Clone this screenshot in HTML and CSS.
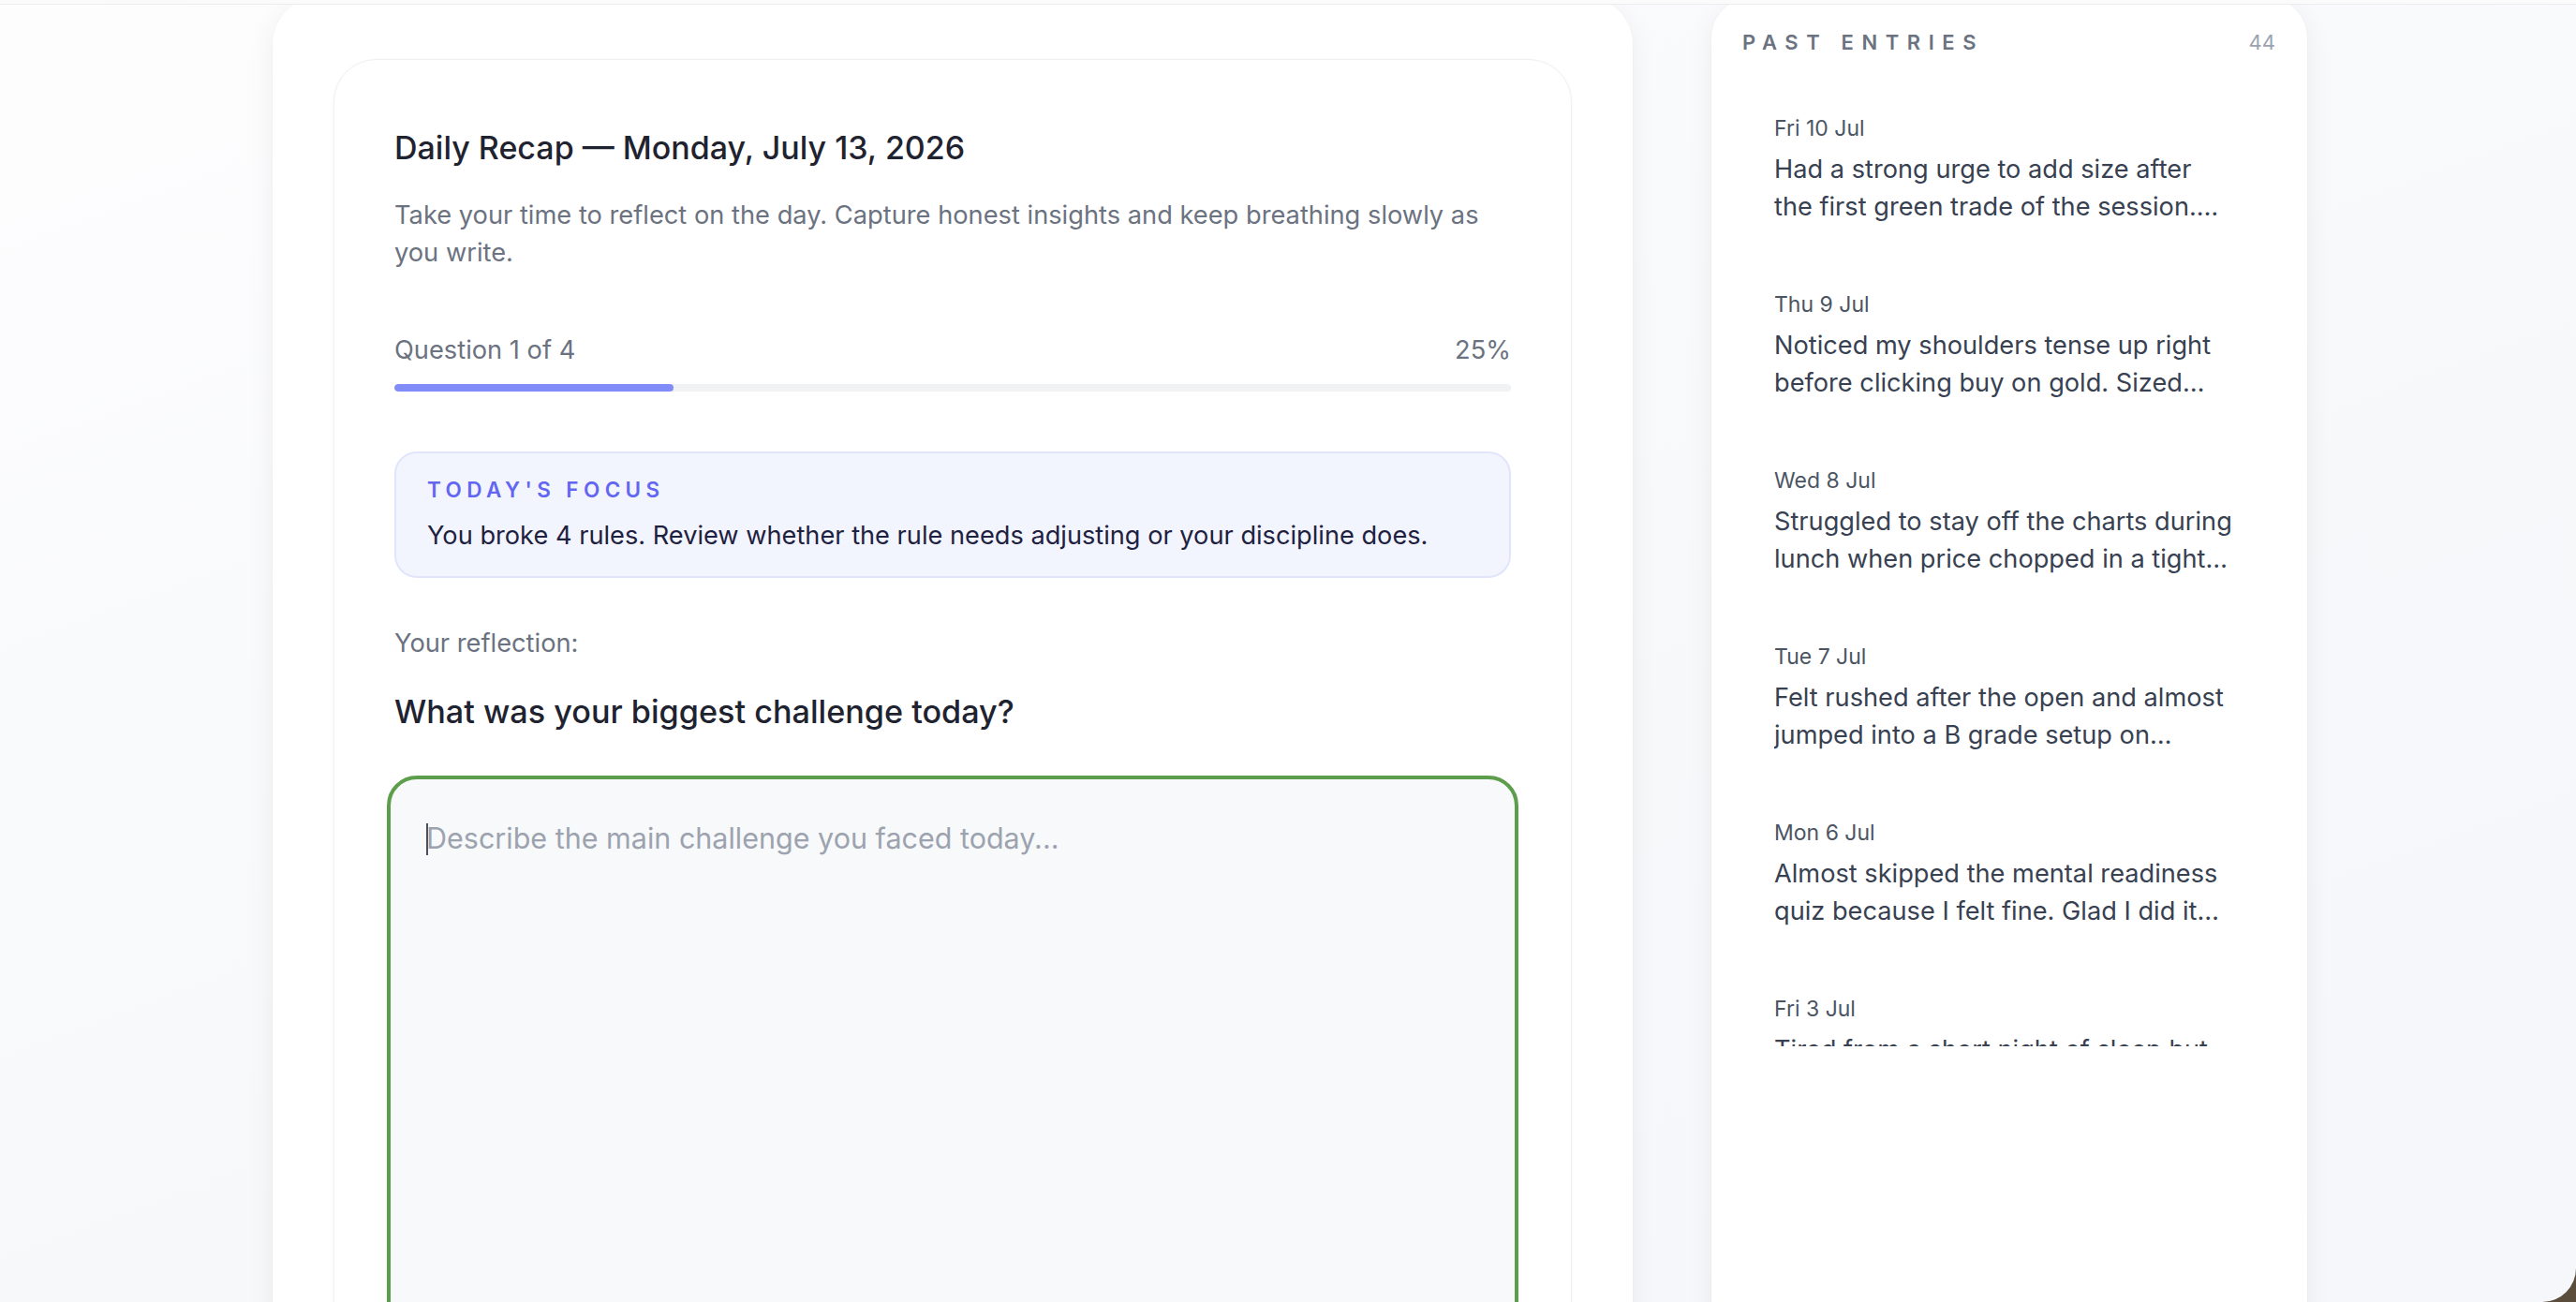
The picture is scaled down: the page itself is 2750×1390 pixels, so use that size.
FILE: index.html
```html
<!DOCTYPE html>
<html lang="en">
<head>
<meta charset="utf-8">
<title>Daily Recap</title>
<link rel="stylesheet" href="styles.css">
</head>
<body>
<div class="app">
  <div class="topbar"></div>
  <div class="content">
    <main class="shell">
      <section class="recap-card">
        <h1 class="recap-title">Daily Recap — Monday, July 13, 2026</h1>
        <p class="recap-desc">Take your time to reflect on the day. Capture honest insights and keep breathing slowly as you write.</p>

        <div class="progress-row">
          <span>Question 1 of 4</span>
          <span>25%</span>
        </div>
        <div class="progress-track"><div class="progress-fill" style="width:25%"></div></div>

        <div class="focus-box">
          <div class="focus-label">TODAY'S FOCUS</div>
          <div class="focus-text">You broke 4 rules. Review whether the rule needs adjusting or your discipline does.</div>
        </div>

        <div class="reflection-label">Your reflection:</div>
        <h2 class="question">What was your biggest challenge today?</h2>

        <div class="answer">
          <span class="caret"></span><span class="placeholder">Describe the main challenge you faced today...</span>
        </div>
      </section>
    </main>

    <aside class="entries-panel">
      <div class="entries-head">
        <span class="entries-title">PAST ENTRIES</span>
        <span class="entries-count">44</span>
      </div>
      <div class="entries-list">
        <div class="entry">
          <div class="entry-date">Fri 10 Jul</div>
          <div class="entry-text">Had a strong urge to add size after the first green trade of the session. Held back and stuck to plan.</div>
        </div>
        <div class="entry">
          <div class="entry-date">Thu 9 Jul</div>
          <div class="entry-text">Noticed my shoulders tense up right before clicking buy on gold. Sized down and breathed first.</div>
        </div>
        <div class="entry">
          <div class="entry-date">Wed 8 Jul</div>
          <div class="entry-text">Struggled to stay off the charts during lunch when price chopped in a tight range all afternoon.</div>
        </div>
        <div class="entry">
          <div class="entry-date">Tue 7 Jul</div>
          <div class="entry-text">Felt rushed after the open and almost jumped into a B grade setup on EURUSD before my plan was ready.</div>
        </div>
        <div class="entry">
          <div class="entry-date">Mon 6 Jul</div>
          <div class="entry-text">Almost skipped the mental readiness quiz because I felt fine. Glad I did it anyway this time.</div>
        </div>
        <div class="entry">
          <div class="entry-date">Fri 3 Jul</div>
          <div class="entry-text">Tired from a short night of sleep but kept my size small and only took A setups.</div>
        </div>
      </div>
    </aside>
  </div>
</div>
</body>
</html>
```
FILE: styles.css
```css
html, body {
  margin: 0;
  padding: 0;
}
html {
  background: #5b4d3b;
}
body {
  font-family: Inter, "Noto Sans", "Liberation Sans", sans-serif;
  -webkit-font-smoothing: antialiased;
}
.app {
  width: 2750px;
  height: 1390px;
  overflow: hidden;
  border-bottom-right-radius: 36px;
  background: linear-gradient(160deg, #fdfdfe 0%, #f7f8fa 60%, #f6f7fa 100%);
  display: flex;
  flex-direction: column;
}
.topbar {
  height: 4px;
  flex: none;
  background: #fbfbfc;
  border-bottom: 1px solid #ececef;
}
.content {
  flex: 1;
  min-height: 0;
  overflow: hidden;
  display: flex;
  justify-content: flex-start;
  gap: 84px;
  padding-left: 291px;
}

/* main card */
.shell {
  width: 1452px;
  flex: none;
  box-sizing: border-box;
  margin-top: -8px;
  margin-bottom: -80px;
  background: #ffffff;
  border-radius: 50px 50px 0 0;
  box-shadow: 0 6px 30px rgba(15, 23, 42, 0.06), 0 1px 3px rgba(15, 23, 42, 0.04);
  padding: 66px 65px 0;
}
.recap-card {
  border: 1px solid #eef0f3;
  border-radius: 46px;
  box-shadow: 0 1px 4px rgba(15, 23, 42, 0.03);
  padding: 72px 64px 80px;
  background: #ffffff;
}
.recap-title {
  margin: 0;
  font-size: 34px;
  line-height: 44px;
  font-weight: 500;
  color: #1f2330;
}
.recap-desc {
  margin: 30px 0 0;
  font-size: 27.25px;
  line-height: 40px;
  color: #6b7280;
}
.progress-row {
  margin-top: 64px;
  display: flex;
  justify-content: space-between;
  font-size: 27.25px;
  line-height: 40px;
  color: #6b7280;
}
.progress-track {
  margin-top: 16px;
  height: 8px;
  border-radius: 4px;
  background: #f1f2f4;
  overflow: hidden;
}
.progress-fill {
  height: 100%;
  background: #818cf8;
  border-radius: 4px;
}
.focus-box {
  margin-top: 64px;
  background: #f3f5fe;
  border: 2px solid #e0e5fb;
  border-radius: 24px;
  padding: 24px 33px 23px;
}
.focus-label {
  font-size: 22.5px;
  line-height: 30px;
  font-weight: 600;
  letter-spacing: 0.24em;
  color: #6366f1;
}
.focus-text {
  margin-top: 14px;
  font-size: 27.2px;
  line-height: 40px;
  color: #1e2140;
}
.reflection-label {
  margin-top: 50px;
  font-size: 27.25px;
  line-height: 40px;
  color: #6b7280;
}
.question {
  margin: 31px 0 0;
  font-size: 34.2px;
  line-height: 44px;
  font-weight: 500;
  color: #1f2330;
}
.answer {
  margin: 46px -8px 0;
  height: 800px;
  border: 4px solid #5c9e4c;
  border-radius: 32px;
  background: #f8f9fb;
  padding: 43px 35px 38px 38px;
  font-size: 30.5px;
  line-height: 40px;
}
.caret {
  display: inline-block;
  width: 2px;
  height: 34px;
  margin-right: -2px;
  vertical-align: -7px;
  background: #4b5060;
}
.placeholder {
  color: #9ca3af;
}

/* right panel */
.entries-panel {
  width: 636px;
  flex: none;
  box-sizing: border-box;
  margin-top: -8px;
  margin-bottom: -80px;
  background: #ffffff;
  border-radius: 44px 44px 0 0;
  box-shadow: 0 6px 30px rgba(15, 23, 42, 0.06), 0 1px 3px rgba(15, 23, 42, 0.04);
  padding: 33px 33px 0;
}
.entries-head {
  display: flex;
  justify-content: space-between;
  align-items: center;
  line-height: 30px;
  font-size: 22px;
}
.entries-title {
  font-weight: 600;
  letter-spacing: 0.39em;
  color: #6b7280;
}
.entries-count {
  color: #9ca3af;
  padding-right: 1px;
}
.entries-list {
  margin-top: 27px;
  height: 1030px;
  overflow: hidden;
}
.entry {
  padding: 34px 46px 34px 34px;
}
.entry-date {
  font-size: 23px;
  line-height: 32px;
  color: #4b5563;
}
.entry-text {
  margin-top: 8px;
  font-size: 27.2px;
  line-height: 40px;
  color: #374151;
  display: -webkit-box;
  -webkit-line-clamp: 2;
  -webkit-box-orient: vertical;
  overflow: hidden;
}
```
